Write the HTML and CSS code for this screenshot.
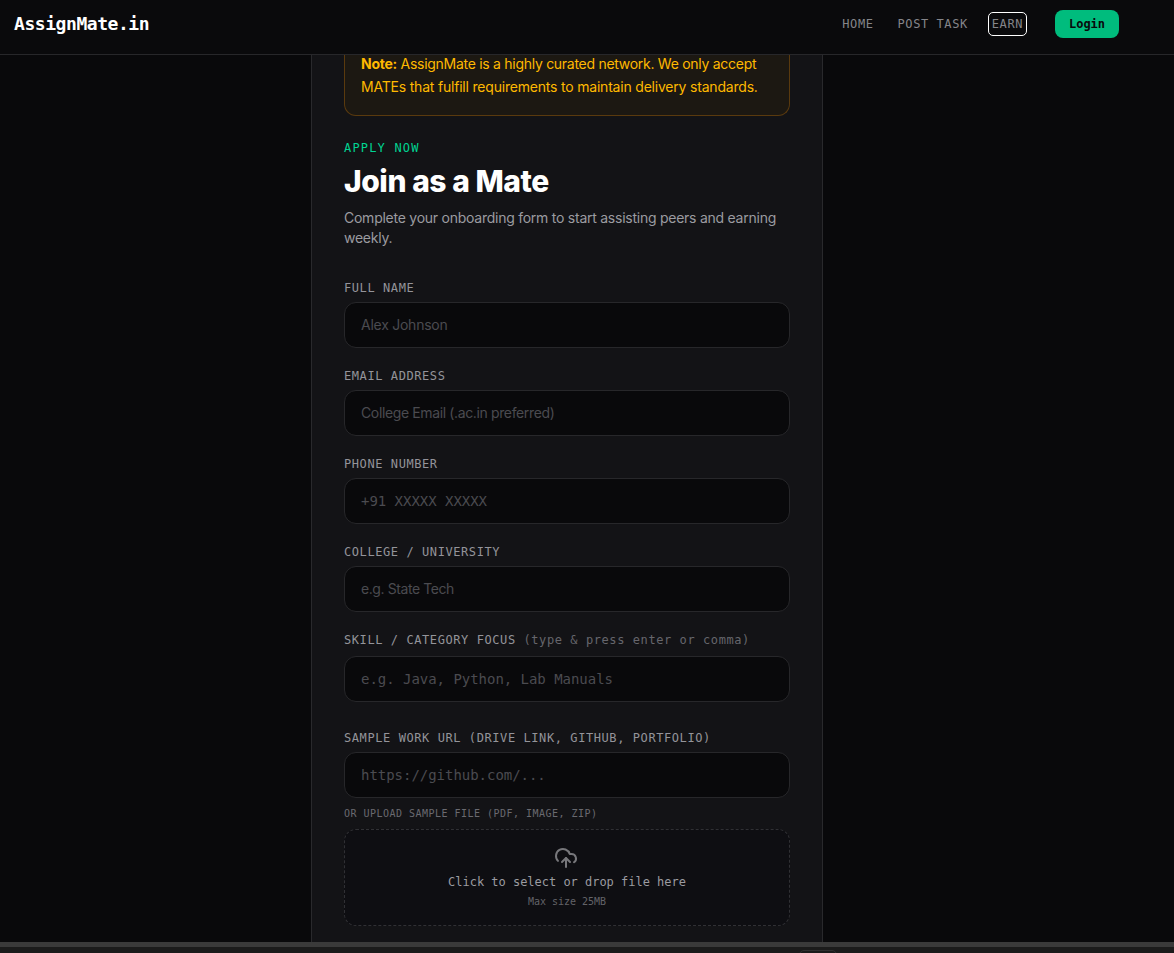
FILE: index.html
```html
<!DOCTYPE html>
<html lang="en">
<head>
    <meta charset="UTF-8">
    <meta name="viewport" content="width=device-width, initial-scale=1.0">
    <title>AssignMate.in - Join as a Mate</title>
    <link rel="stylesheet" href="styles.css">
</head>
<body>
    <header class="navbar">
        <a class="logo">AssignMate.in</a>
        <nav class="nav-links">
            <a class="nav-link">HOME</a>
            <a class="nav-link">POST TASK</a>
            <a class="nav-link focused">EARN</a>
            <button class="login-btn">Login</button>
        </nav>
    </header>

    <main class="page">
        <section class="card">
            <div class="note">
                <span class="note-line"><strong>Note:</strong> AssignMate is a highly curated network. We only accept</span>
                <span class="note-line second">MATEs that fulfill requirements to maintain delivery standards.</span>
            </div>

            <p class="eyebrow">APPLY NOW</p>
            <h1 class="title">Join as a Mate</h1>
            <p class="subtitle">Complete your onboarding form to start assisting peers and earning<br>weekly.</p>

            <form class="form">
                <div class="field">
                    <label for="name">FULL NAME</label>
                    <input type="text" id="name" class="name" placeholder="Alex Johnson">
                </div>
                <div class="field">
                    <label for="email">EMAIL ADDRESS</label>
                    <input type="email" id="email" class="email" placeholder="College Email (.ac.in preferred)">
                </div>
                <div class="field">
                    <label for="phone">PHONE NUMBER</label>
                    <input type="tel" id="phone" class="mono" placeholder="+91 XXXXX XXXXX">
                </div>
                <div class="field">
                    <label for="college">COLLEGE / UNIVERSITY</label>
                    <input type="text" id="college" class="college" placeholder="e.g. State Tech">
                </div>
                <div class="field skill">
                    <label for="skill">SKILL / CATEGORY FOCUS <span class="label-hint">(type &amp; press enter or comma)</span></label>
                    <input type="text" id="skill" class="mono" placeholder="e.g. Java, Python, Lab Manuals">
                </div>
                <div class="field">
                    <label for="sample">SAMPLE WORK URL (DRIVE LINK, GITHUB, PORTFOLIO)</label>
                    <input type="text" id="sample" class="mono" placeholder="https://github.com/...">
                </div>
                <p class="upload-label">OR UPLOAD SAMPLE FILE (PDF, IMAGE, ZIP)</p>
                <div class="dropzone">
                    <svg class="upload-icon" viewBox="0 0 24 24" fill="none" stroke="currentColor" stroke-width="2" stroke-linecap="round" stroke-linejoin="round">
                        <path d="M4 14.899A7 7 0 1 1 15.71 8h1.79a4.5 4.5 0 0 1 2.5 8.242"/>
                        <path d="M12 12v9"/>
                        <path d="m16 16-4-4-4 4"/>
                    </svg>
                    <span class="drop-text">Click to select or drop file here</span>
                    <span class="drop-size">Max size 25MB</span>
                </div>
            </form>
        </section>
    </main>

    <footer class="bottom-bar">
        <span class="bar-tab"></span>
    </footer>
</body>
</html>
```
FILE: styles.css
```css
* {
    box-sizing: border-box;
}
body {
    margin: 0;
    height: 953px;
    overflow: hidden;
    display: flex;
    flex-direction: column;
    background-color: #09090b;
    font-family: Inter, sans-serif;
    color: #fff;
}
p, h1 {
    margin: 0;
}
.navbar {
    height: 55px;
    flex-shrink: 0;
    display: flex;
    justify-content: space-between;
    align-items: flex-start;
    padding: 10px 55px 0 14px;
    background-color: #0a0a0c;
    border-bottom: 1px solid #27272a;
    font-family: "DejaVu Sans Mono", monospace;
}
.logo {
    font-size: 18px;
    font-weight: bold;
    letter-spacing: -0.44px;
    line-height: 28px;
}
.nav-links {
    display: flex;
    align-items: center;
    gap: 24px;
}
.nav-link {
    font-size: 12px;
    line-height: 16px;
    letter-spacing: 0.58px;
    color: #85858a;
}
.focused {
    outline: 1px solid #fff;
    outline-offset: 3px;
    border-radius: 1px;
    margin-right: 8px;
}
.login-btn {
    width: 64px;
    height: 28px;
    padding: 0;
    border: none;
    border-radius: 8px;
    background-color: #00bc7d;
    color: #09090b;
    font-family: inherit;
    font-size: 12px;
    font-weight: bold;
}
.page {
    flex: 1;
    min-height: 0;
    display: flex;
    overflow: hidden;
    padding-left: 311px;
}
.card {
    width: 512px;
    height: 887px;
    padding: 0 32px;
    border: 1px solid #29292c;
    border-top: none;
    border-bottom: none;
    background-color: #131316;
}
.note {
    display: flow-root;
    height: 61px;
    padding: 0 16px;
    border: 1px solid #5a3a0e;
    border-top: none;
    border-radius: 0 0 12px 12px;
    background-color: #1c1812;
    color: #ffb900;
    font-size: 14px;
    line-height: 23px;
    letter-spacing: -0.28px;
    white-space: nowrap;
}
.note-line {
    display: block;
    margin-top: -3px;
}
.note .second {
    margin-top: 0;
    letter-spacing: -0.2px;
}
.eyebrow {
    margin-top: 24px;
    font-family: "DejaVu Sans Mono", monospace;
    font-size: 12px;
    line-height: 16px;
    letter-spacing: 1.18px;
    color: #00d492;
}
.title {
    margin-top: 7px;
    font-size: 30px;
    font-weight: 800;
    line-height: 36px;
    letter-spacing: -0.45px;
}
.subtitle {
    margin-top: 9px;
    font-size: 14px;
    line-height: 20px;
    letter-spacing: -0.25px;
    color: #9b9ba0;
    white-space: nowrap;
}
.form {
    display: flex;
    flex-direction: column;
    margin-top: 32px;
}
.field {
    display: flex;
    flex-direction: column;
    gap: 6px;
    margin-bottom: 20px;
}
.field label {
    font-family: "DejaVu Sans Mono", monospace;
    font-size: 12px;
    line-height: 16px;
    letter-spacing: 0.58px;
    color: #94949a;
    white-space: nowrap;
}
.field .label-hint {
    color: #66666c;
}
.field input {
    height: 46px;
    padding: 0 16px 1px;
    border: 1px solid #27272a;
    border-radius: 12px;
    background-color: #09090b;
    font-family: Inter, sans-serif;
    font-size: 14px;
}
.field input::placeholder {
    color: #4b4b50;
}
.field .name {
    letter-spacing: -0.25px;
}
.field .email {
    letter-spacing: -0.37px;
}
.field .college {
    letter-spacing: -0.42px;
}
.field .mono {
    font-family: "DejaVu Sans Mono", monospace;
    letter-spacing: -0.03px;
}
.skill {
    gap: 8px;
    margin-bottom: 28px;
}
.upload-label {
    margin-top: -12px;
    font-family: "DejaVu Sans Mono", monospace;
    font-size: 10px;
    line-height: 15px;
    letter-spacing: 0.48px;
    color: #6a6a70;
}
.dropzone {
    height: 97px;
    margin-top: 8px;
    padding-top: 16px;
    display: flex;
    flex-direction: column;
    align-items: center;
    border: 1px dashed #303034;
    border-radius: 12px;
    background-color: #0e0e12;
    font-family: "DejaVu Sans Mono", monospace;
}
.upload-icon {
    width: 24px;
    height: 24px;
    margin-right: 2px;
    color: #77777b;
}
.drop-text {
    margin-top: 4px;
    font-size: 12px;
    line-height: 16px;
    letter-spacing: -0.02px;
    color: #9b9ba0;
}
.drop-size {
    margin-top: 4px;
    font-size: 10px;
    line-height: 15px;
    letter-spacing: -0.02px;
    color: #636368;
}
.bottom-bar {
    height: 11px;
    flex-shrink: 0;
    display: flex;
    padding: 3px 0 0 799px;
    border-top: 5px solid #3a3a3a;
    background-color: #1b1b1b;
    overflow: hidden;
}
.bar-tab {
    width: 38px;
    height: 10px;
    border: 1px solid #303030;
    border-radius: 5px;
}
```
